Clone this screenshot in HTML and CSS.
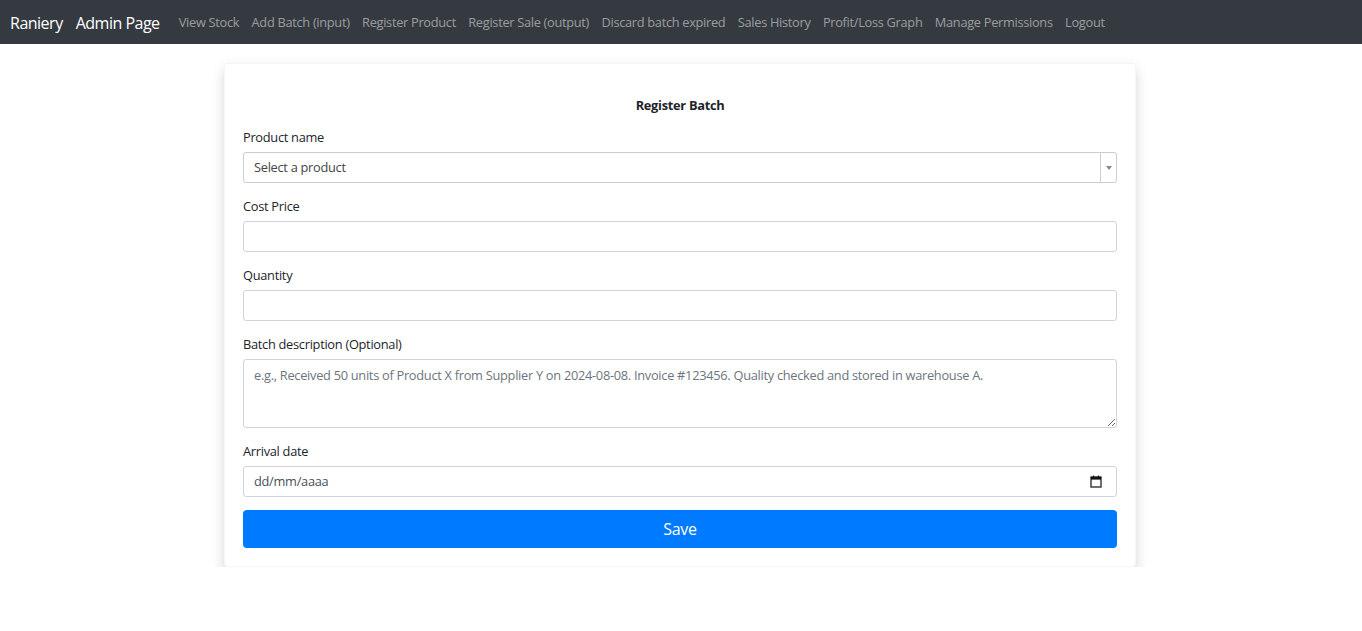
FILE: index.html
```html
<!DOCTYPE html>
<html lang="en">
<head>
<meta charset="utf-8">
<title>Register Batch</title>
<link rel="stylesheet" href="styles.css">
</head>
<body>
<nav class="navbar">
  <a class="brand" href="#">Raniery</a>
  <a class="brand" href="#">Admin Page</a>
  <ul class="nav">
    <li><a href="#">View Stock</a></li>
    <li><a href="#">Add Batch (input)</a></li>
    <li><a href="#">Register Product</a></li>
    <li><a href="#">Register Sale (output)</a></li>
    <li><a href="#">Discard batch expired</a></li>
    <li><a href="#">Sales History</a></li>
    <li><a href="#">Profit/Loss Graph</a></li>
    <li><a href="#">Manage Permissions</a></li>
    <li><a href="#">Logout</a></li>
  </ul>
</nav>
<main class="container">
  <form class="card">
    <h2 class="title">Register Batch</h2>
    <div class="group">
      <label class="label">Product name</label>
      <div class="select">
        <span class="select-text">Select a product</span>
        <span class="select-arrow"><span class="tri"></span></span>
      </div>
    </div>
    <div class="group">
      <label class="label">Cost Price</label>
      <div class="input"></div>
    </div>
    <div class="group">
      <label class="label">Quantity</label>
      <div class="input"></div>
    </div>
    <div class="group">
      <label class="label">Batch description (Optional)</label>
      <textarea class="textarea" placeholder="e.g., Received 50 units of Product X from Supplier Y on 2024-08-08. Invoice #123456. Quality checked and stored in warehouse A."></textarea>
    </div>
    <div class="group">
      <label class="label">Arrival date</label>
      <div class="input date">
        <span class="date-text">dd/mm/aaaa</span>
        <svg class="cal" width="12" height="13" viewBox="0 0 12 13"><rect x="1" y="2" width="10" height="10" fill="none" stroke="#333" stroke-width="1.4"/><rect x="1" y="2" width="10" height="2.6" fill="#111"/><rect x="2.8" y="0.6" width="1.4" height="2" fill="#111"/><rect x="7.8" y="0.6" width="1.4" height="2" fill="#111"/></svg>
      </div>
    </div>
    <button type="button" class="btn">Save</button>
  </form>
</main>
</body>
</html>
```

FILE: styles.css
```css
* { box-sizing: border-box; }
html, body { margin: 0; padding: 0; }
body {
  font-family: "Open Sans", "Noto Sans", sans-serif;
  font-size: 12.8px;
  letter-spacing: -0.28px;
  line-height: 1.5;
  color: #212529;
  background: #fff;
}
.navbar {
  height: 44px;
  background: #343a40;
  display: flex;
  align-items: center;
  padding: 1px 10px 0;
}
.brand {
  color: #fff;
  text-decoration: none;
  font-size: 16px;
  letter-spacing: -0.5px;
  margin-right: 13px;
}
.nav {
  list-style: none;
  margin: 0;
  padding: 0;
  display: flex;
}
.nav a {
  display: block;
  padding: 0 6.2px;
  color: rgba(255,255,255,.5);
  text-decoration: none;
  font-size: 12.8px;
  letter-spacing: -0.3px;
}
.container {
  width: 912px;
  margin: 19px 0 0 224px;
}
.card {
  display: flex;
  flex-direction: column;
  background: #fff;
  border: 1px solid rgba(0,0,0,.04);
  border-radius: 4px;
  box-shadow: 0 6px 13px rgba(0,0,0,.17);
  padding: 19px 18px 18px;
}
.title {
  margin: 13px 0 12px;
  text-align: center;
  font-size: 12.8px;
  font-weight: 700;
  line-height: 19px;
}
.group {
  display: flex;
  flex-direction: column;
  margin-bottom: 13px;
}
.label {
  line-height: 19px;
  padding-top: 1px;
  margin-bottom: 5px;
}
.input, .select {
  height: 31px;
  border: 1px solid #ced4da;
  border-radius: 3px;
  background: #fff;
}
.select {
  display: flex;
  align-items: center;
  border-color: #c9cdd4;
}
.select-text {
  flex: 1;
  padding: 1px 0 0 10px;
  color: #444;
}
.select-arrow {
  width: 16px;
  height: 100%;
  border-left: 1px solid #c9cdd4;
  display: flex;
  align-items: center;
  justify-content: center;
}
.tri {
  width: 0;
  height: 0;
  border-left: 3px solid transparent;
  border-right: 3px solid transparent;
  border-top: 4px solid #888;
}
.textarea {
  display: block;
  width: 100%;
  height: 69px;
  border: 1px solid #ced4da;
  border-radius: 3px;
  padding: 6px 10px 5px;
  font: inherit;
  letter-spacing: inherit;
  line-height: 1.5;
  color: #495057;
  resize: vertical;
}
.textarea::placeholder { color: #6c757d; }
.date {
  display: flex;
  align-items: center;
  padding: 0 14px 0 10px;
}
.date-text {
  flex: 1;
  padding-top: 1px;
  color: #495057;
}
.btn {
  height: 38px;
  border: none;
  border-radius: 4px;
  background: #007bff;
  color: #fff;
  font-family: inherit;
  font-size: 16px;
  letter-spacing: -0.3px;
  padding-top: 1px;
  cursor: pointer;
}
```
